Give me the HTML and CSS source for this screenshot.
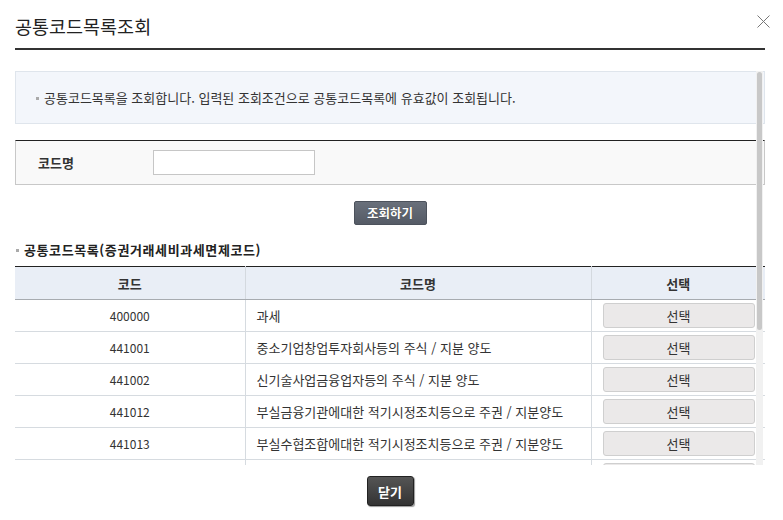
FILE: index.html
```html
<!DOCTYPE html>
<html lang="ko">
<head>
    <meta charset="UTF-8">
    <title>공통코드목록조회</title>
    <link rel="stylesheet" href="styles.css">
</head>
<body>
<div class="pop">
    <div class="pop-head">
        <h1 class="pop-title">공통코드목록조회</h1>
        <a href="#" class="pop-close" title="닫기">
            <svg width="13" height="13" viewBox="0 0 13 13"><path d="M0.5 0.5L12.5 12.5M12.5 0.5L0.5 12.5" stroke="#777" stroke-width="1" fill="none"/></svg>
        </a>
    </div>
    <div class="pop-body">
        <div class="info-box">
            <p class="info-txt">공통코드목록을 조회합니다. 입력된 조회조건으로 공통코드목록에 유효값이 조회됩니다.</p>
        </div>
        <div class="search-box">
            <label class="search-label" for="cdNm">코드명</label>
            <input type="text" id="cdNm" class="search-input">
        </div>
        <div class="btn-area">
            <button type="button" class="btn-search">조회하기</button>
        </div>
        <h2 class="sub-title">공통코드목록(증권거래세비과세면제코드)</h2>
        <table class="list-table">
            <colgroup>
                <col style="width:230px">
                <col style="width:346px">
                <col>
            </colgroup>
            <thead>
            <tr>
                <th>코드</th>
                <th>코드명</th>
                <th>선택</th>
            </tr>
            </thead>
            <tbody>
            <tr>
                <td class="c num">400000</td>
                <td>과세</td>
                <td class="c"><button type="button" class="btn-pick">선택</button></td>
            </tr>
            <tr>
                <td class="c num">441001</td>
                <td>중소기업창업투자회사등의 주식 / 지분 양도</td>
                <td class="c"><button type="button" class="btn-pick">선택</button></td>
            </tr>
            <tr>
                <td class="c num">441002</td>
                <td>신기술사업금융업자등의 주식 / 지분 양도</td>
                <td class="c"><button type="button" class="btn-pick">선택</button></td>
            </tr>
            <tr>
                <td class="c num">441012</td>
                <td>부실금융기관에대한 적기시정조치등으로 주권 / 지분양도</td>
                <td class="c"><button type="button" class="btn-pick">선택</button></td>
            </tr>
            <tr>
                <td class="c num">441013</td>
                <td>부실수협조합에대한 적기시정조치등으로 주권 / 지분양도</td>
                <td class="c"><button type="button" class="btn-pick">선택</button></td>
            </tr>
            <tr>
                <td class="c num"></td>
                <td></td>
                <td class="c"><button type="button" class="btn-pick"></button></td>
            </tr>
            </tbody>
        </table>
        <div class="scroll-track"><div class="scroll-thumb"></div></div>
    </div>
    <div class="pop-foot">
        <button type="button" class="btn-close">닫기</button>
    </div>
</div>
</body>
</html>
```

FILE: styles.css
```css
*{
    box-sizing: border-box;
}
body{
    margin: 0;
    font-family: "Noto Sans CJK KR", "Liberation Sans", sans-serif;
    font-size: 13px;
    color: #333;
    background: #fff;
}
.pop{
    width: 783px;
    height: 520px;
    padding: 0 18px 0 15px;
}
.pop-head{
    position: relative;
    height: 50px;
    border-bottom: 2px solid #333;
}
.pop-title{
    margin: 0;
    padding-top: 14px;
    font-size: 18.5px;
    font-weight: normal;
    line-height: 24px;
    color: #222;
}
.pop-close{
    position: absolute;
    right: -5px;
    top: 15px;
    display: block;
    width: 13px;
    height: 13px;
}
.pop-close svg{
    display: block;
}
.pop-body{
    position: relative;
    height: 394px;
    margin-top: 21px;
    overflow: hidden;
}
.info-box{
    height: 53px;
    padding: 0 20px;
    background: #f3f6fb;
    border: 1px solid #dfe5ec;
    display: flex;
    align-items: center;
}
.info-txt{
    margin: 0;
    padding-left: 8px;
    position: relative;
    line-height: 16px;
    color: #333;
}
.info-txt:before{
    content: '';
    position: absolute;
    left: 0;
    top: 7px;
    width: 3px;
    height: 3px;
    background: #aaa;
}
.search-box{
    display: flex;
    align-items: center;
    height: 45px;
    margin-top: 16px;
    background: #f9f9f9;
    border: 1px solid #c8c8c8;
    border-top: 1px solid #222;
}
.search-label{
    width: 137px;
    padding-left: 22px;
    font-weight: bold;
    color: #333;
}
.search-input{
    width: 162px;
    height: 25px;
    border: 1px solid #c6c6c6;
    background: #fff;
    margin: 0;
}
.btn-area{
    margin-top: 16px;
    text-align: center;
    height: 24px;
}
.btn-search{
    height: 24px;
    width: 73px;
    padding: 0;
    border: 1px solid #4c525c;
    border-radius: 2px;
    background: linear-gradient(#69707b, #555b66);
    color: #fff;
    font-family: inherit;
    font-size: 12.5px;
    font-weight: bold;
    line-height: 20px;
    text-shadow: 0 0 1px #333;
}
.sub-title{
    margin: 15px 0 0;
    padding-left: 9px;
    position: relative;
    font-size: 13px;
    line-height: 20px;
    height: 26px;
    color: #222;
    letter-spacing: 0.6px;
}
.sub-title:before{
    content: '';
    position: absolute;
    left: 1px;
    top: 9px;
    width: 3px;
    height: 3px;
    background: #aaa;
}
.list-table{
    width: 100%;
    border-collapse: collapse;
    table-layout: fixed;
    border-top: 1px solid #222;
}
.list-table th{
    height: 33px;
    background: #e9eef6;
    border-bottom: 1px solid #a7abb0;
    border-left: 1px solid #d4d9df;
    font-weight: bold;
    color: #333;
    padding: 0;
}
.list-table td{
    height: 32px;
    border-bottom: 1px solid #d6dbe0;
    border-left: 1px solid #d6dbe0;
    padding: 0 11px;
    color: #333;
    white-space: nowrap;
}
.list-table th:first-child,
.list-table td:first-child{
    border-left: 0;
}
.list-table td.c{
    text-align: center;
}
.list-table td.num{
    font-size: 12px;
}
.btn-pick{
    display: block;
    width: 152px;
    height: 25px;
    margin: 0;
    padding: 0;
    border: 1px solid #cfcfcf;
    border-radius: 3px;
    background: #ebe9e9;
    color: #333;
    font-family: inherit;
    font-size: 13px;
}
.scroll-track{
    position: absolute;
    right: 2px;
    top: 0;
    width: 7px;
    height: 100%;
    background: #f1f1f1;
}
.scroll-thumb{
    margin: 1px auto 0;
    width: 5px;
    height: 258px;
    border-radius: 3px;
    background: #c8c8c8;
}
.pop-foot{
    padding-top: 11px;
    text-align: center;
}
.btn-close{
    width: 47px;
    height: 30px;
    padding: 0;
    border: 1px solid #222;
    border-radius: 3px;
    background: linear-gradient(#555, #333);
    box-shadow: 1px 1px 1px #999;
    color: #fff;
    font-family: inherit;
    font-size: 13px;
    font-weight: bold;
}
```
